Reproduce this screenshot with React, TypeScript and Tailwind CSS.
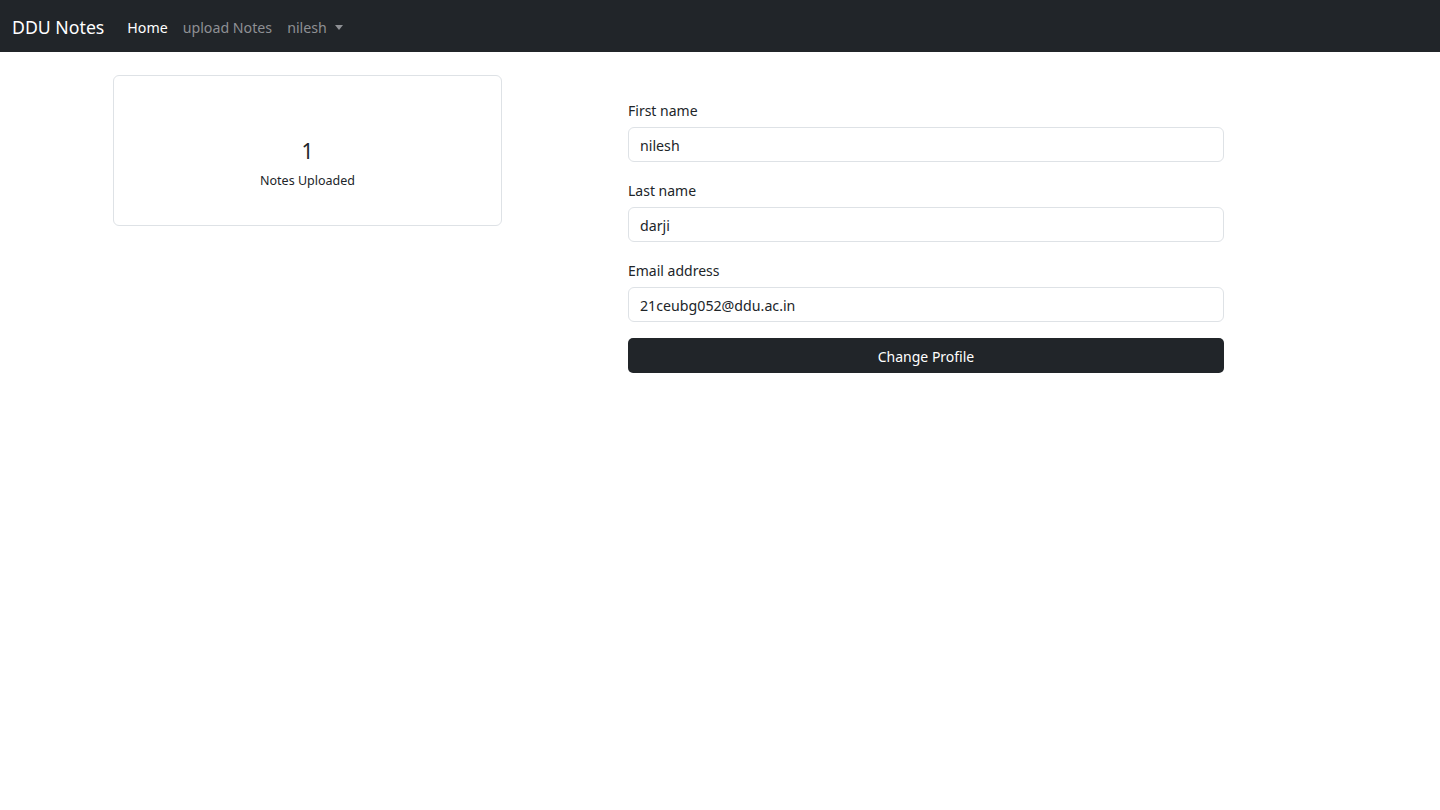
import React from "react";

const fields = [
  { label: "First name", value: "nilesh" },
  { label: "Last name", value: "darji" },
  { label: "Email address", value: "21ceubg052@ddu.ac.in" },
];

export default function App() {
  return (
    <div className="min-h-screen bg-white font-['Noto_Sans',sans-serif] text-[#212529]">
      {/* Navbar */}
      <nav className="h-[52px] bg-[#212529] flex items-center px-[12px] pt-[3px]">
        <a className="text-[17.7px] text-white mr-[23px] leading-none">DDU Notes</a>
        <div className="flex items-center gap-[15px] text-[14.2px]">
          <a className="text-white">Home</a>
          <a className="text-[#8e9094]">upload Notes</a>
          <a className="text-[#8e9094] flex items-center gap-[8px]">
            nilesh
            <span className="inline-block w-0 h-0 border-l-[4.5px] border-r-[4.5px] border-t-[5px] border-l-transparent border-r-transparent border-t-[#8e9094]"></span>
          </a>
        </div>
      </nav>

      <div className="flex ml-[113px] mt-[23px] gap-[126px]">
        {/* Stats card */}
        <div className="w-[389px] h-[151px] border border-[#dee2e6] rounded-[6px] flex flex-col items-center pt-[61px]">
          <div className="text-[21px] leading-[28px]">1</div>
          <div className="text-[12.5px] leading-[20px] mt-[6px]">Notes Uploaded</div>
        </div>

        {/* Profile form */}
        <form className="w-[596px] pt-[25px] flex flex-col">
          {fields.map((f, i) => (
            <div key={f.label} className={i === fields.length - 1 ? "mb-[16px]" : "mb-[18px]"}>
              <label className="block text-[14px] leading-[22px] mb-[5px]">{f.label}</label>
              <input
                readOnly
                value={f.value}
                className="w-full h-[35px] border border-[#dee2e6] rounded-[6px] px-[11px] pt-[2px] text-[14.2px] text-[#212529] outline-none"
              />
            </div>
          ))}
          <button
            type="button"
            className="h-[35px] w-full bg-[#212529] text-white rounded-[5px] text-[14px] pt-[1px]"
          >
            Change Profile
          </button>
        </form>
      </div>
    </div>
  );
}
